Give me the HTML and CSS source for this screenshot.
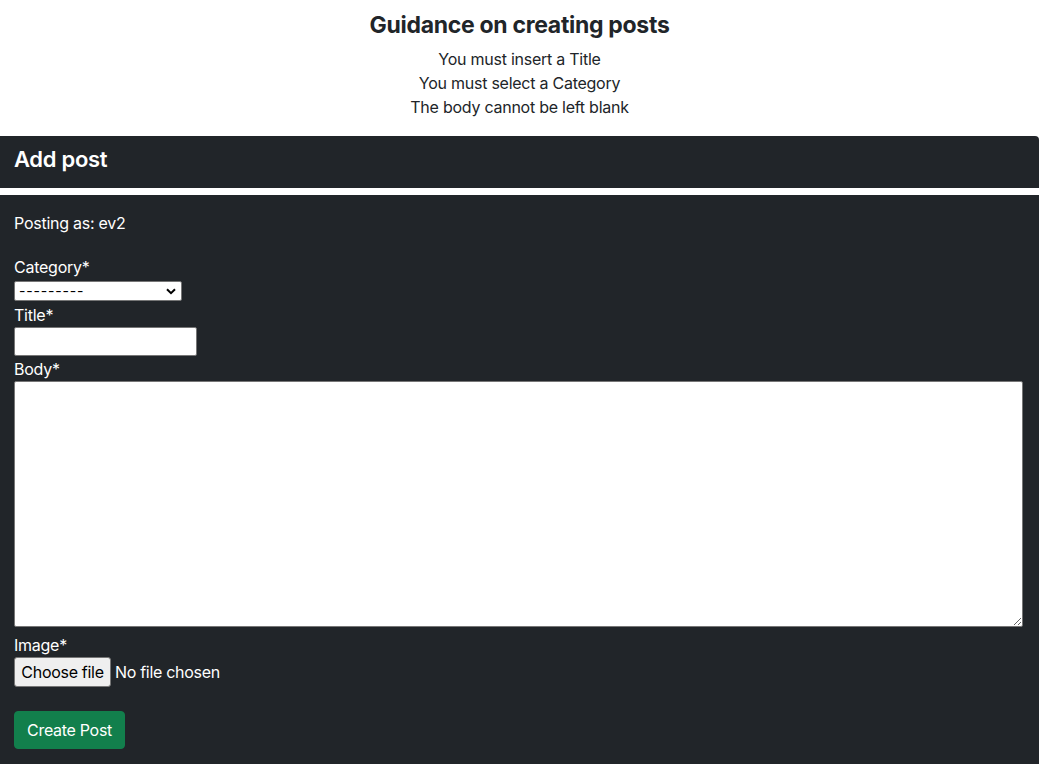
FILE: index.html
```html
<!DOCTYPE html>
<html lang="en">
<head>
<meta charset="utf-8">
<title>Add post</title>
<link rel="stylesheet" href="styles.css">
</head>
<body>
<section class="guidance">
  <h4 class="guidance-title">Guidance on creating posts</h4>
  <p class="guidance-line">You must insert a Title</p>
  <p class="guidance-line">You must select a Category</p>
  <p class="guidance-line">The body cannot be left blank</p>
</section>
<div class="card-header">
  <h4 class="card-title">Add post</h4>
</div>
<div class="card-body">
  <p class="posting-as">Posting as: ev2</p>
  <form class="post-form">
    <label class="field-label" for="cat">Category*</label>
    <div class="select-wrap">
      <select id="cat" class="select">
        <option>---------</option>
      </select>
      <svg class="chevron" width="10" height="7" viewBox="0 0 10 7"><path d="M1 1.2 L5 5.2 L9 1.2" fill="none" stroke="#000" stroke-width="2"/></svg>
    </div>
    <label class="field-label" for="title">Title*</label>
    <input id="title" class="text-input" type="text">
    <label class="field-label" for="body">Body*</label>
    <textarea id="body" class="textarea"></textarea>
    <label class="field-label">Image*</label>
    <div class="file-row">
      <button type="button" class="file-btn">Choose file</button>
      <span class="file-text">No file chosen</span>
    </div>
    <button type="button" class="submit-btn">Create Post</button>
  </form>
</div>
</body>
</html>
```
FILE: styles.css
```css
* { box-sizing: border-box; }
body {
  margin: 0;
  font-family: Inter, "Noto Sans", "Liberation Sans", sans-serif;
  font-size: 16px;
  line-height: 24px;
  letter-spacing: -0.25px;
  color: #212529;
  background: #fff;
}
.guidance {
  padding-top: 11px;
  text-align: center;
}
.guidance-title {
  margin: 0 0 7px;
  font-size: 23px;
  line-height: 29px;
  font-weight: 700;
  letter-spacing: -0.3px;
}
.guidance-line {
  margin: 0;
  font-size: 16px;
  line-height: 24px;
}
.guidance-line:last-child { margin-bottom: 17px; }
.card-header {
  background: #212529;
  color: #fff;
  padding: 8px 14px;
  height: 52px;
  border-radius: 0 4px 0 0;
}
.card-title {
  margin: 0;
  font-size: 22px;
  line-height: 29px;
  font-weight: 600;
  letter-spacing: -0.3px;
  padding-top: 1px;
}
.card-body {
  margin-top: 7px;
  background: #212529;
  color: #fff;
  padding: 16px 14px 16px;
}
.posting-as {
  margin: 0 0 20px;
  line-height: 24px;
  font-size: 16px;
}
.post-form { display: flex; flex-direction: column; align-items: flex-start; }
.field-label { display: block; line-height: 24px; }
.select-wrap {
  position: relative;
  margin: 2px 0;
  width: 168px;
  height: 20px;
}
.select {
  display: block;
  appearance: none;
  -webkit-appearance: none;
  width: 168px;
  height: 20px;
  margin: 0;
  padding: 0 4px;
  background: #fff;
  border: 1px solid #767676;
  border-radius: 2px;
  font-family: inherit;
  font-size: 14px;
  color: #000;
  line-height: 18px;
  letter-spacing: 0.8px;
}
.chevron {
  position: absolute;
  right: 6px;
  top: 7px;
  pointer-events: none;
}
.text-input {
  display: block;
  width: 183px;
  height: 29px;
  margin: 0 0 1px;
  border: 1px solid #767676;
  border-radius: 2px;
  background: #fff;
}
.textarea {
  width: 1009px;
  height: 246px;
  margin: 0 0 6px;
  border: 1px solid #767676;
  border-radius: 2px;
  background: #fff;
  resize: both;
  display: block;
}
.file-row {
  display: flex;
  align-items: center;
  height: 30px;
  gap: 4px;
}
.file-btn {
  height: 30px;
  width: 97px;
  padding: 0;
  background: #efefef;
  border: 1px solid #767676;
  border-radius: 3px;
  font-family: inherit;
  font-size: 16px;
  letter-spacing: -0.3px;
  color: #000;
}
.file-text { font-size: 16px; color: #fff; letter-spacing: -0.3px; }
.submit-btn {
  margin-top: 24px;
  height: 38px;
  width: 111px;
  padding: 0;
  white-space: nowrap;
  background: #127f4c;
  border: 1px solid #127f4c;
  border-radius: 4px;
  color: #fff;
  font-family: inherit;
  font-size: 16px;
  letter-spacing: -0.3px;
  line-height: 24px;
}
```
